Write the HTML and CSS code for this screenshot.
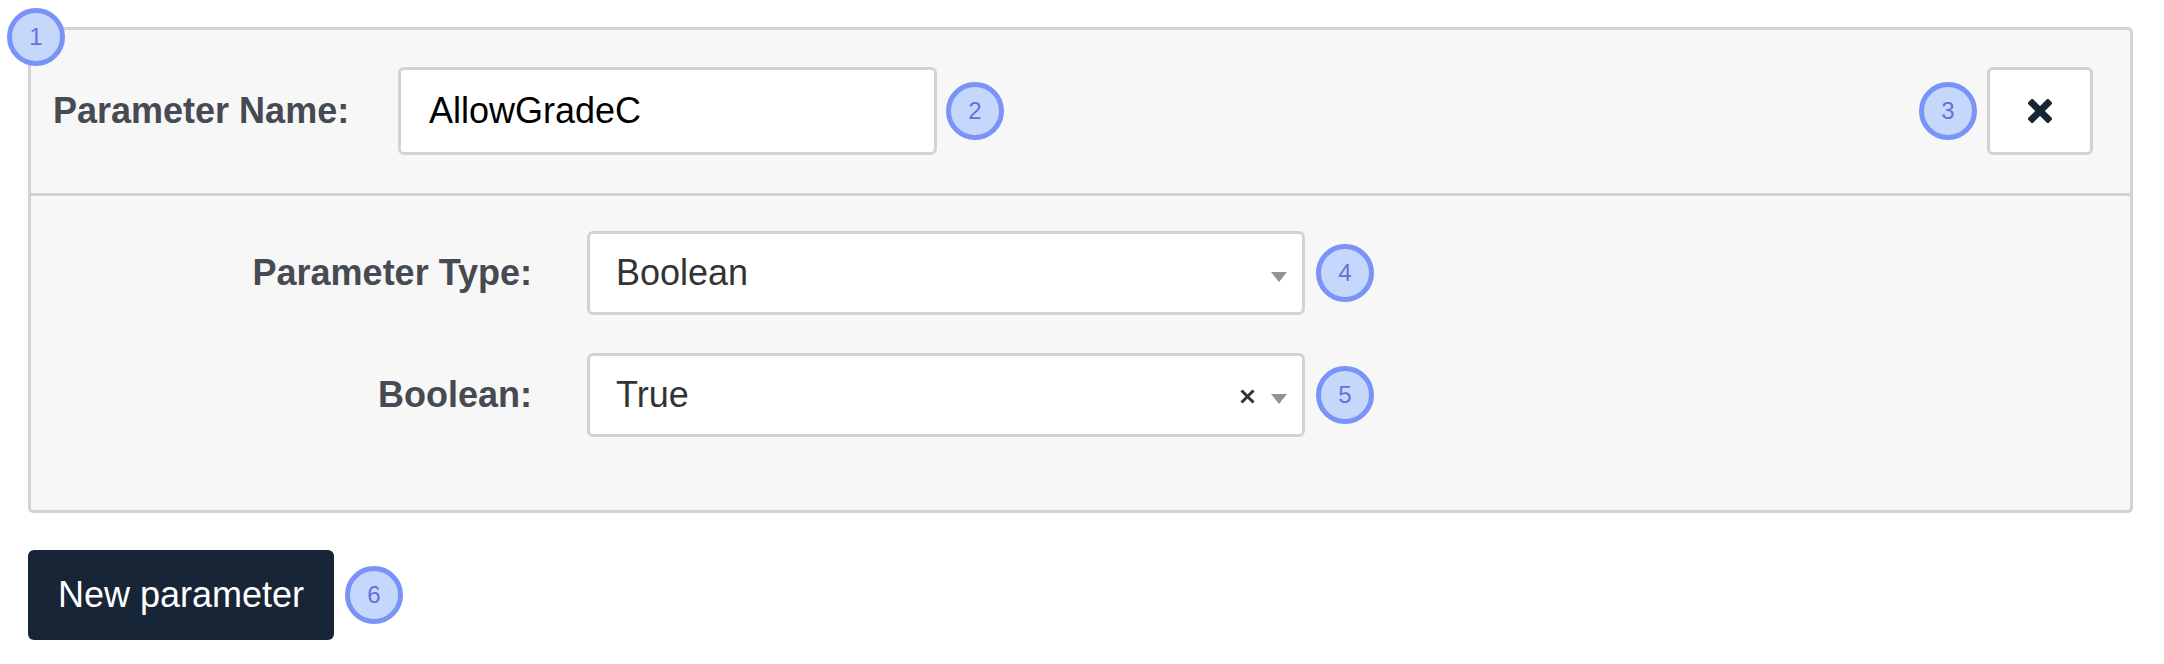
FILE: index.html
```html
<!DOCTYPE html>
<html>
<head>
<meta charset="utf-8">
<link rel="stylesheet" href="styles.css">
</head>
<body>
<div class="page">
  <div class="panel">
    <span class="badge badge-corner">1</span>
    <div class="panel-head">
      <label class="name-label">Parameter Name:</label>
      <div class="text-input">AllowGradeC</div>
      <span class="badge badge-after">2</span>
      <span class="badge badge-before push">3</span>
      <button class="remove-btn" type="button" aria-label="Remove">
        <svg width="24" height="24" viewBox="0 0 24 24">
          <rect x="-2.5" y="8.6" width="29" height="6.8" rx="1.4" transform="rotate(45 12 12)" fill="#172536"/>
          <rect x="-2.5" y="8.6" width="29" height="6.8" rx="1.4" transform="rotate(-45 12 12)" fill="#172536"/>
        </svg>
      </button>
    </div>
    <div class="panel-body">
      <div class="field-row">
        <label class="field-label">Parameter Type:</label>
        <div class="select">
          <span class="select-value">Boolean</span>
          <span class="select-arrow"></span>
        </div>
        <span class="badge badge-after-select">4</span>
      </div>
      <div class="field-row">
        <label class="field-label">Boolean:</label>
        <div class="select">
          <span class="select-value">True</span>
          <span class="select-clear">
            <svg width="15" height="15" viewBox="0 0 15 15">
              <path d="M1.5 1.5 L13.5 13.5 M13.5 1.5 L1.5 13.5" stroke="#333" stroke-width="3" fill="none"/>
            </svg>
          </span>
          <span class="select-arrow"></span>
        </div>
        <span class="badge badge-after-select">5</span>
      </div>
    </div>
  </div>
  <div class="actions">
    <button class="new-btn" type="button">New parameter</button>
    <span class="badge badge-after-btn">6</span>
  </div>
</div>
</body>
</html>
```

FILE: styles.css
```css
html, body {
  margin: 0;
  padding: 0;
  background: #ffffff;
}

body {
  font-family: "Liberation Sans", Arial, Helvetica, sans-serif;
}

.page {
  padding: 27px 31px 0 28px;
}

.panel {
  position: relative;
  background: #f7f7f7;
  border: 3px solid #d3d3d3;
  border-radius: 5px;
}

.badge {
  box-sizing: border-box;
  width: 58px;
  height: 58px;
  border-radius: 50%;
  background: #c5d8fb;
  border: 5px solid #7993f8;
  color: #5f74d8;
  font-size: 24px;
  display: flex;
  align-items: center;
  justify-content: center;
  flex: none;
}

.badge-corner {
  position: absolute;
  left: -24px;
  top: -22px;
}

.panel-head {
  display: flex;
  align-items: center;
  padding: 37px 37px 38px 22px;
  border-bottom: 3px solid #d3d3d3;
}

.name-label,
.field-label {
  font-size: 36px;
  font-weight: bold;
  color: #464a52;
}

.name-label {
  width: 345px;
  flex: none;
}

.text-input {
  box-sizing: border-box;
  width: 539px;
  height: 88px;
  background: #fff;
  border: 3px solid #d3d3d3;
  border-radius: 6px;
  padding: 0 28px;
  display: flex;
  align-items: center;
  font-size: 36px;
  color: #000;
}

.badge-after {
  margin-left: 9px;
}

.push {
  margin-left: auto;
}

.badge-before {
  margin-right: 10px;
}

.remove-btn {
  box-sizing: border-box;
  width: 106px;
  height: 88px;
  background: #fff;
  border: 3px solid #d3d3d3;
  border-radius: 6px;
  display: flex;
  align-items: center;
  justify-content: center;
  padding: 0;
}

.panel-body {
  padding: 35px 0 35px 0;
}

.field-row {
  display: flex;
  align-items: center;
  margin-bottom: 38px;
}

.field-label {
  width: 501px;
  text-align: right;
  margin-right: 55px;
  flex: none;
}

.select {
  box-sizing: border-box;
  width: 718px;
  height: 84px;
  background: #fff;
  border: 3px solid #d3d3d3;
  border-radius: 6px;
  display: flex;
  align-items: center;
  padding: 0 15px 0 26px;
  font-size: 36px;
  color: #333;
}

.select-value {
  flex: 1;
}

.select-clear {
  display: flex;
  margin-right: 16px;
  margin-top: 2px;
}

.select-arrow {
  width: 0;
  height: 0;
  border-style: solid;
  border-width: 10px 8px 0 8px;
  border-color: #929292 transparent transparent transparent;
  margin-top: 8px;
}

.badge-after-select {
  margin-left: 11px;
}

.actions {
  display: flex;
  align-items: center;
  margin-top: 37px;
}

.new-btn {
  box-sizing: border-box;
  width: 306px;
  height: 90px;
  padding: 0;
  background: #172536;
  color: #fff;
  border: none;
  border-radius: 6px;
  font-family: "Liberation Sans", Arial, Helvetica, sans-serif;
  font-size: 36px;
  text-align: center;
}

.badge-after-btn {
  margin-left: 11px;
}
```
